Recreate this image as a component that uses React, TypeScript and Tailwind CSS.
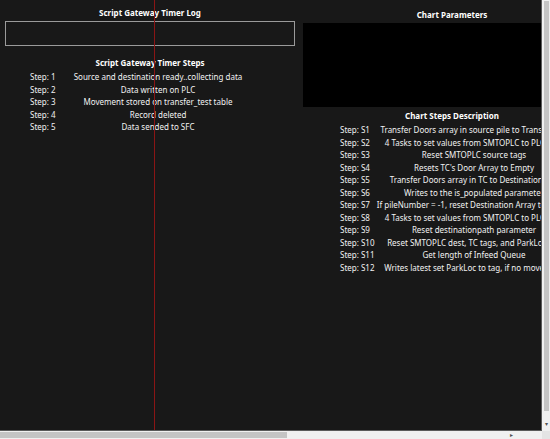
import React from 'react';

const timerSteps: [string, string][] = [
    ['1', 'Source and destination ready..collecting data'],
    ['2', 'Data written on PLC'],
    ['3', 'Movement stored on transfer_test table'],
    ['4', 'Record deleted'],
    ['5', 'Data sended to SFC'],
];

const chartSteps: [string, string][] = [
    ['S1', 'Transfer Doors array in source pile to Transfer Car'],
    ['S2', '4 Tasks to set values from SMTOPLC to PLC tags'],
    ['S3', 'Reset SMTOPLC source tags'],
    ['S4', "Resets TC's Door Array to Empty"],
    ['S5', 'Transfer Doors array in TC to Destination Pile'],
    ['S6', 'Writes to the is_populated parameter'],
    ['S7', 'If pileNumber = -1, reset Destination Array to Empty'],
    ['S8', '4 Tasks to set values from SMTOPLC to PLC tags'],
    ['S9', 'Reset destinationpath parameter'],
    ['S10', 'Reset SMTOPLC dest, TC tags, and ParkLoc tag'],
    ['S11', 'Get length of Infeed Queue'],
    ['S12', 'Writes latest set ParkLoc to tag, if no movement'],
];

const Title: React.FC<{ children: React.ReactNode }> = ({ children }) => (
    <div className="text-center font-bold text-[8px] leading-[14px] text-white">{children}</div>
);

const App: React.FC = () => {
    return (
        <div className="w-[550px] h-[439px] flex flex-col bg-[#f0f0f0] overflow-hidden font-['Noto_Sans',sans-serif] text-[#f2f2f2]">
            <div className="flex flex-1 min-h-0">
                {/* canvas */}
                <div className="relative flex-1 overflow-hidden bg-[#181818] border-r border-b border-[#5a5a5a]">
                    <div className="flex w-[1024px]">
                        {/* left column */}
                        <div className="w-[300px] flex flex-col pt-[6px]">
                            <Title>Script Gateway Timer Log</Title>
                            <div className="mx-[5px] mt-[1px] h-[25px] border border-[#9a9a9a]" />
                            <div className="mt-[10px]">
                                <Title>Script Gateway Timer Steps</Title>
                            </div>
                            <div className="flex flex-col pl-[30px] mt-[1px]">
                                {timerSteps.map(([n, text]) => (
                                    <div key={n} className="flex text-[8px] leading-[12.5px] whitespace-nowrap">
                                        <div className="w-[43px]">Step: {n}</div>
                                        <div className="w-[170px] text-center">{text}</div>
                                    </div>
                                ))}
                            </div>
                        </div>

                        {/* right column */}
                        <div className="w-[300px] ml-[2px] flex flex-col pt-[8px]">
                            <Title>Chart Parameters</Title>
                            <div className="ml-[1px] mt-[1px] h-[84px] bg-black" />
                            <div className="mt-[2px]">
                                <Title>Chart Steps Description</Title>
                            </div>
                            <div className="flex flex-col pl-[38px] mt-[1px]">
                                {chartSteps.map(([n, text]) => (
                                    <div key={n} className="flex text-[8px] leading-[12.5px] whitespace-nowrap">
                                        <div className="w-[36px]">Step: {n}</div>
                                        <div className="w-[196px] text-center">{text}</div>
                                    </div>
                                ))}
                            </div>
                        </div>
                    </div>
                    <div className="absolute top-0 bottom-0 left-[154px] w-px bg-[#8a1515]" />
                </div>

                {/* vertical scrollbar */}
                <div className="w-[8px] flex flex-col items-center bg-[#f0f0f0]">
                    <div className="w-[5px] mt-[1px] h-[410px] bg-[#c4c4c4]" />
                    <div className="mt-[10px] text-[6px] leading-[6px] text-[#505050]">▾</div>
                </div>
            </div>

            {/* horizontal scrollbar */}
            <div className="h-[8px] flex">
                <div className="w-[542px] flex items-center bg-[#f0f0f0]">
                    <div className="w-[287px] h-[6px] bg-[#c4c4c4]" />
                    <div className="ml-auto mr-[29px] text-[6px] leading-[6px] text-[#505050]">▸</div>
                </div>
                <div className="flex-1 bg-[#e4e4e4]" />
            </div>
        </div>
    );
};

export default App;
